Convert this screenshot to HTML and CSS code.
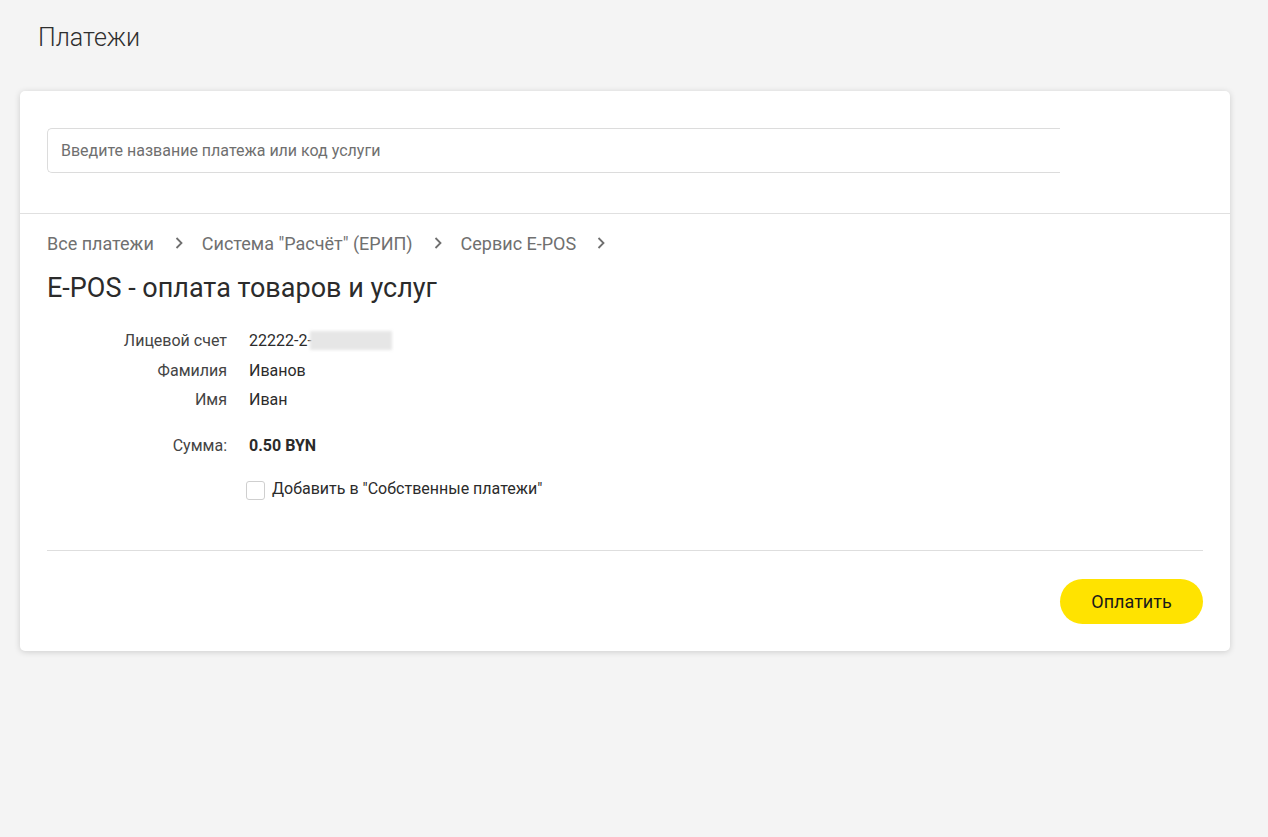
FILE: index.html
```html
<!DOCTYPE html>
<html lang="ru">
<head>
<meta charset="utf-8">
<title>Платежи</title>
<link rel="stylesheet" href="styles.css">
</head>
<body>
<div class="page">
  <h1 class="page-title">Платежи</h1>
  <div class="card">
    <div class="search-section">
      <div class="search-input">Введите название платежа или код услуги</div>
    </div>
    <div class="content">
      <nav class="crumbs">
        <span class="crumb">Все платежи</span>
        <svg class="chev" viewBox="0 0 8 12" width="8" height="12"><path d="M1.5 1 L6.5 6 L1.5 11" fill="none" stroke="#6f6f6f" stroke-width="1.8"/></svg>
        <span class="crumb">Система "Расчёт" (ЕРИП)</span>
        <svg class="chev" viewBox="0 0 8 12" width="8" height="12"><path d="M1.5 1 L6.5 6 L1.5 11" fill="none" stroke="#6f6f6f" stroke-width="1.8"/></svg>
        <span class="crumb">Сервис E-POS</span>
        <svg class="chev" viewBox="0 0 8 12" width="8" height="12"><path d="M1.5 1 L6.5 6 L1.5 11" fill="none" stroke="#6f6f6f" stroke-width="1.8"/></svg>
      </nav>
      <h2 class="service-title">E-POS - оплата товаров и услуг</h2>
      <div class="fields">
        <div class="row"><span class="label">Лицевой счет</span><span class="value">22222-2-<span class="blur"></span></span></div>
        <div class="row"><span class="label">Фамилия</span><span class="value">Иванов</span></div>
        <div class="row"><span class="label">Имя</span><span class="value">Иван</span></div>
      </div>
      <div class="row sum"><span class="label">Сумма:</span><span class="value bold">0.50 BYN</span></div>
      <label class="check"><span class="box"></span><span>Добавить в "Собственные платежи"</span></label>
      <div class="divider"></div>
      <div class="actions"><button class="pay">Оплатить</button></div>
    </div>
  </div>
</div>
</body>
</html>
```
FILE: styles.css
```css
html, body {
  margin: 0;
  padding: 0;
  background: #f4f4f4;
  font-family: Roboto, "Liberation Sans", Arial, sans-serif;
  color: #333;
}
.page {
  padding: 21px 38px 40px 20px;
}
.page-title {
  margin: 0 0 0 18px;
  font-size: 25px;
  font-weight: 300;
  line-height: 34px;
  color: #2f2f2f;
  height: 70px;
}
.card {
  background: #fff;
  border-radius: 5px;
  box-shadow: 0 1px 6px rgba(0,0,0,0.16);
  width: 1210px;
}
.search-section {
  padding: 37px 27px 40px;
  border-bottom: 1px solid #e0e0e0;
}
.search-input {
  box-sizing: border-box;
  width: 1013px;
  height: 45px;
  border: 1px solid #dcdcdc;
  border-right: none;
  border-radius: 5px 0 0 5px;
  padding: 0 13px;
  display: flex;
  align-items: center;
  font-size: 16px;
  color: #6f6f6f;
}
.content {
  padding: 17px 27px 27px;
}
.crumbs {
  display: flex;
  align-items: center;
  height: 24px;
  font-size: 18px;
  color: #707070;
}
.chev {
  margin: 0 19px 0 21px;
}
.service-title {
  margin: 18px 0 0;
  font-size: 27px;
  font-weight: 400;
  line-height: 30px;
  color: #2b2b2b;
}
.fields {
  margin-top: 23px;
}
.row {
  display: flex;
  align-items: center;
  height: 29.5px;
  font-size: 16px;
}
.label {
  width: 180px;
  text-align: right;
  color: #444;
}
.value {
  margin-left: 22px;
  color: #2b2b2b;
  display: flex;
  align-items: center;
}
.blur {
  display: inline-block;
  width: 82px;
  height: 19px;
  margin-left: -2px;
  background: #e6e6e6;
  filter: blur(1.5px);
}
.sum {
  margin-top: 16px;
}
.bold {
  font-weight: 700;
}
.check {
  display: flex;
  align-items: center;
  margin: 18px 0 0 199px;
  font-size: 16px;
  color: #2b2b2b;
  height: 20px;
}
.box {
  box-sizing: border-box;
  width: 19px;
  height: 19px;
  border: 1px solid #cfcfcf;
  border-radius: 3px;
  margin-right: 7px;
  margin-top: 4px;
}
.divider {
  margin-top: 52px;
  border-top: 1px solid #dedede;
}
.actions {
  display: flex;
  justify-content: flex-end;
  margin-top: 28px;
}
.pay {
  width: 143px;
  height: 45px;
  border: none;
  border-radius: 23px;
  background: #ffe300;
  font-family: Roboto, "Liberation Sans", Arial, sans-serif;
  font-size: 18px;
  color: #1a1a1a;
  cursor: pointer;
}
```
